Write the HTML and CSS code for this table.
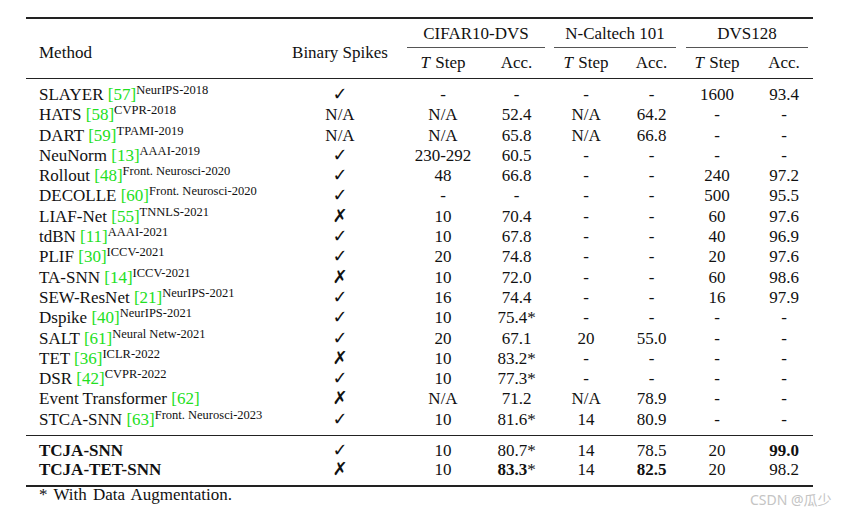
FILE: index.html
```html
<!DOCTYPE html>
<html>
<head>
<meta charset="utf-8">
<link rel="stylesheet" href="styles.css">
</head>
<body>
<div class="page">
  <table class="results">
    <colgroup>
      <col class="c-method"><col class="c-bin"><col class="c-t1"><col class="c-a1"><col class="c-t2"><col class="c-a2"><col class="c-t3"><col class="c-a3">
    </colgroup>
    <thead>
      <tr class="h1">
        <th rowspan="2" class="method">Method</th>
        <th rowspan="2" class="bin">Binary Spikes</th>
        <th colspan="2" class="grp"><div class="cmid">CIFAR10-DVS</div></th>
        <th colspan="2" class="grp"><div class="cmid">N-Caltech 101</div></th>
        <th colspan="2" class="grp"><div class="cmid cmid-last">DVS128</div></th>
      </tr>
      <tr class="h2">
        <th><i>T</i> Step</th><th>Acc.</th>
        <th><i>T</i> Step</th><th>Acc.</th>
        <th><i>T</i> Step</th><th>Acc.</th>
      </tr>
    </thead>
    <tbody class="main">
      <tr><td class="method">SLAYER <span class="ref">[57]</span><span class="sup">NeurIPS-2018</span></td><td><span class="mk">✓</span></td><td>-</td><td>-</td><td>-</td><td>-</td><td>1600</td><td>93.4</td></tr>
      <tr><td class="method">HATS <span class="ref">[58]</span><span class="sup">CVPR-2018</span></td><td>N/A</td><td>N/A</td><td>52.4</td><td>N/A</td><td>64.2</td><td>-</td><td>-</td></tr>
      <tr><td class="method">DART <span class="ref">[59]</span><span class="sup">TPAMI-2019</span></td><td>N/A</td><td>N/A</td><td>65.8</td><td>N/A</td><td>66.8</td><td>-</td><td>-</td></tr>
      <tr><td class="method">NeuNorm <span class="ref">[13]</span><span class="sup">AAAI-2019</span></td><td><span class="mk">✓</span></td><td>230-292</td><td>60.5</td><td>-</td><td>-</td><td>-</td><td>-</td></tr>
      <tr><td class="method">Rollout <span class="ref">[48]</span><span class="sup">Front. Neurosci-2020</span></td><td><span class="mk">✓</span></td><td>48</td><td>66.8</td><td>-</td><td>-</td><td>240</td><td>97.2</td></tr>
      <tr><td class="method">DECOLLE <span class="ref">[60]</span><span class="sup">Front. Neurosci-2020</span></td><td><span class="mk">✓</span></td><td>-</td><td>-</td><td>-</td><td>-</td><td>500</td><td>95.5</td></tr>
      <tr><td class="method">LIAF-Net <span class="ref">[55]</span><span class="sup">TNNLS-2021</span></td><td><span class="mk">✗</span></td><td>10</td><td>70.4</td><td>-</td><td>-</td><td>60</td><td>97.6</td></tr>
      <tr><td class="method">tdBN <span class="ref">[11]</span><span class="sup">AAAI-2021</span></td><td><span class="mk">✓</span></td><td>10</td><td>67.8</td><td>-</td><td>-</td><td>40</td><td>96.9</td></tr>
      <tr><td class="method">PLIF <span class="ref">[30]</span><span class="sup">ICCV-2021</span></td><td><span class="mk">✓</span></td><td>20</td><td>74.8</td><td>-</td><td>-</td><td>20</td><td>97.6</td></tr>
      <tr><td class="method">TA-SNN <span class="ref">[14]</span><span class="sup">ICCV-2021</span></td><td><span class="mk">✗</span></td><td>10</td><td>72.0</td><td>-</td><td>-</td><td>60</td><td>98.6</td></tr>
      <tr><td class="method">SEW-ResNet <span class="ref">[21]</span><span class="sup">NeurIPS-2021</span></td><td><span class="mk">✓</span></td><td>16</td><td>74.4</td><td>-</td><td>-</td><td>16</td><td>97.9</td></tr>
      <tr><td class="method">Dspike <span class="ref">[40]</span><span class="sup">NeurIPS-2021</span></td><td><span class="mk">✓</span></td><td>10</td><td>75.4*</td><td>-</td><td>-</td><td>-</td><td>-</td></tr>
      <tr><td class="method">SALT <span class="ref">[61]</span><span class="sup">Neural Netw-2021</span></td><td><span class="mk">✓</span></td><td>20</td><td>67.1</td><td>20</td><td>55.0</td><td>-</td><td>-</td></tr>
      <tr><td class="method">TET <span class="ref">[36]</span><span class="sup">ICLR-2022</span></td><td><span class="mk">✗</span></td><td>10</td><td>83.2*</td><td>-</td><td>-</td><td>-</td><td>-</td></tr>
      <tr><td class="method">DSR <span class="ref">[42]</span><span class="sup">CVPR-2022</span></td><td><span class="mk">✓</span></td><td>10</td><td>77.3*</td><td>-</td><td>-</td><td>-</td><td>-</td></tr>
      <tr><td class="method">Event Transformer <span class="ref">[62]</span></td><td><span class="mk">✗</span></td><td>N/A</td><td>71.2</td><td>N/A</td><td>78.9</td><td>-</td><td>-</td></tr>
      <tr><td class="method">STCA-SNN <span class="ref">[63]</span><span class="sup">Front. Neurosci-2023</span></td><td><span class="mk">✓</span></td><td>10</td><td>81.6*</td><td>14</td><td>80.9</td><td>-</td><td>-</td></tr>
    </tbody>
    <tbody class="ours">
      <tr><td class="method"><b>TCJA-SNN</b></td><td><span class="mk">✓</span></td><td>10</td><td>80.7*</td><td>14</td><td>78.5</td><td>20</td><td><b>99.0</b></td></tr>
      <tr><td class="method"><b>TCJA-TET-SNN</b></td><td><span class="mk">✗</span></td><td>10</td><td><b>83.3</b>*</td><td>14</td><td><b>82.5</b></td><td>20</td><td>98.2</td></tr>
    </tbody>
  </table>
  <p class="note">* With Data Augmentation.</p>
  <div class="watermark">CSDN @瓜少</div>
</div>
</body>
</html>
```

FILE: styles.css
```css
html, body {
  margin: 0;
  padding: 0;
  background: #fff;
}

.page {
  position: relative;
  width: 846px;
  height: 516px;
  padding-top: 17px;
  box-sizing: border-box;
  font-family: "Liberation Serif", "Times New Roman", serif;
  color: #111;
  font-size: 17px;
}

.results {
  margin-left: 26px;
  width: 787px;
  table-layout: fixed;
  border-collapse: separate;
  border-spacing: 0;
}

.c-method { width: 253px; }
.c-bin { width: 122px; }
.c-t1 { width: 84px; }
.c-a1 { width: 63px; }
.c-t2 { width: 76px; }
.c-a2 { width: 55px; }
.c-t3 { width: 76px; }
.c-a3 { width: 58px; }

th, td {
  padding: 0;
  text-align: center;
  font-weight: normal;
  white-space: nowrap;
}

.h1 th {
  border-top: 2px solid #222;
  padding-top: 5px;
  padding-bottom: 0;
  line-height: 20px;
}

.h1 th.method,
.h1 th.bin {
  vertical-align: bottom;
  padding-bottom: 15px;
  border-bottom: 1px solid #222;
}

th.method, td.method {
  text-align: left;
  padding-left: 13px;
}

.cmid {
  padding-bottom: 3px;
  margin: 0 3px 0 6px;
  border-bottom: 1px solid #555;
}

.cmid-last {
  margin-right: 5px;
  margin-left: 7px;
}

.h2 th {
  padding-top: 5px;
  padding-bottom: 5px;
  line-height: 20px;
  border-bottom: 1px solid #222;
}

.h2 i {
  margin-right: 1px;
}

.main td {
  line-height: 20.3px;
  height: 20.3px;
}

.main tr:first-child td {
  padding-top: 6px;
}

.main tr:last-child td {
  padding-bottom: 5px;
}

.ours td {
  line-height: 19px;
}

.ours tr:first-child td {
  border-top: 1px solid #222;
  padding-top: 5px;
}

.ours tr:last-child td {
  padding-bottom: 6px;
  border-bottom: 2px solid #222;
}

.ref {
  color: #22e022;
}

.sup {
  font-size: 12.5px;
  vertical-align: 6.5px;
  line-height: 0;
}

.mk {
  font-family: "DejaVu Sans", sans-serif;
  font-size: 18px;
  line-height: 0;
}

.note {
  margin: 0;
  padding-left: 39px;
  line-height: 16px;
  word-spacing: 2px;
}

.watermark {
  position: absolute;
  left: 750px;
  top: 491px;
  font-family: "Noto Sans", "Noto Sans CJK SC", sans-serif;
  font-size: 14px;
  line-height: 18px;
  color: #c4c4c4;
}
```
